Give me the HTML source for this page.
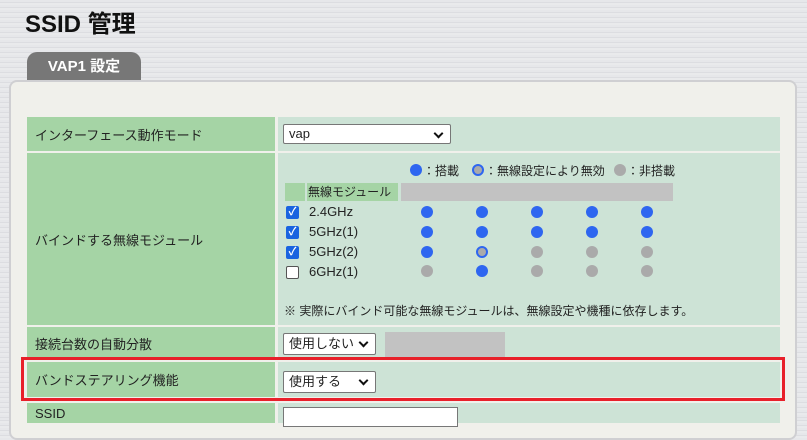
<!DOCTYPE html>
<html><head><meta charset="utf-8"><style>
*{box-sizing:border-box;margin:0;padding:0}
body{width:807px;height:418px;overflow:hidden;position:relative;background:repeating-linear-gradient(180deg,#e6e7ea 0 2px,#dcdde1 2px 3px,#e9eaec 3px 5px);font-family:"Liberation Sans","Noto Sans CJK JP",sans-serif;font-size:13px;color:#222}
.a{position:absolute}
h1{position:absolute;left:25px;top:4px;font-size:24px;font-weight:bold;color:#111}
.tab{left:27px;top:52px;width:114px;height:29px;background:#777;border-radius:10px 10px 0 0;color:#fff;font-weight:bold;font-size:15px;text-align:center;line-height:30px}
.panel{left:9px;top:80px;width:788px;height:360px;background:#f0f0eb;border:2px solid #cfcfd2;border-radius:8px}
.l{background:#a5d4a5;left:27px;width:248px;padding-left:8px;display:flex;align-items:center;white-space:nowrap}
.v{background:#cde3d6;left:278px;width:502px}
.sel{position:absolute;background:#fff;border:1px solid #777;border-radius:2px;font-size:13px;padding-left:5px;line-height:18px;white-space:nowrap}
.sel:after{content:"";position:absolute;right:8px;top:5px;width:5px;height:5px;border-right:2px solid #111;border-bottom:2px solid #111;transform:rotate(45deg)}
.d{position:absolute;width:12px;height:12px;border-radius:50%;background:#2e66f0}
.g{background:#aaa}
.o{background:#aaa;border:2px solid #2e66f0}
.cb{position:absolute;left:286px;width:13px;height:13px;border-radius:2px;background:#1a63e0;color:#fff;font-size:11px;line-height:13px;text-align:center;font-weight:bold}
.cb.n{background:#fff;border:1px solid #555}
.t{position:absolute;white-space:nowrap}
.s{font-size:12px}
</style></head><body>
<h1>SSID 管理</h1>
<div class="a tab">VAP1 設定</div>
<div class="a panel"></div>
<div class="a l" style="top:117px;height:34px">インターフェース動作モード</div>
<div class="a v" style="top:117px;height:34px"></div>
<div class="sel" style="left:283px;top:124px;width:168px;height:20px">vap</div>
<div class="a l" style="top:153px;height:172px">バインドする無線モジュール</div>
<div class="a v" style="top:153px;height:172px"></div>
<div class="d" style="left:410px;top:164px"></div><div class="t s" style="left:423px;top:162px">：搭載</div>
<div class="d o" style="left:472px;top:164px"></div><div class="t s" style="left:485px;top:162px">：無線設定により無効</div>
<div class="d g" style="left:614px;top:164px"></div><div class="t s" style="left:627px;top:162px">：非搭載</div>
<div class="a" style="left:285px;top:183px;width:20px;height:18px;background:#a5d4a5"></div>
<div class="a s" style="left:307px;top:183px;width:91px;height:18px;background:#a5d4a5;padding-left:1px;line-height:18px;white-space:nowrap;overflow:hidden">無線モジュール</div>
<div class="a" style="left:401px;top:183px;width:272px;height:18px;background:#c2c2c2"></div>
<div class="cb" style="top:206px">✓</div><div class="t" style="left:309px;top:204px">2.4GHz</div>
<div class="cb" style="top:226px">✓</div><div class="t" style="left:309px;top:224px">5GHz(1)</div>
<div class="cb" style="top:246px">✓</div><div class="t" style="left:309px;top:244px">5GHz(2)</div>
<div class="cb n" style="top:266px"></div><div class="t" style="left:309px;top:264px">6GHz(1)</div>
<div class="d" style="left:421px;top:206px"></div><div class="d" style="left:476px;top:206px"></div><div class="d" style="left:531px;top:206px"></div><div class="d" style="left:586px;top:206px"></div><div class="d" style="left:641px;top:206px"></div>
<div class="d" style="left:421px;top:226px"></div><div class="d" style="left:476px;top:226px"></div><div class="d" style="left:531px;top:226px"></div><div class="d" style="left:586px;top:226px"></div><div class="d" style="left:641px;top:226px"></div>
<div class="d" style="left:421px;top:246px"></div><div class="d o" style="left:476px;top:246px"></div><div class="d g" style="left:531px;top:246px"></div><div class="d g" style="left:586px;top:246px"></div><div class="d g" style="left:641px;top:246px"></div>
<div class="d g" style="left:421px;top:265px"></div><div class="d" style="left:476px;top:265px"></div><div class="d g" style="left:531px;top:265px"></div><div class="d g" style="left:586px;top:265px"></div><div class="d g" style="left:641px;top:265px"></div>
<div class="t s" style="left:284px;top:302px">※ 実際にバインド可能な無線モジュールは、無線設定や機種に依存します。</div>
<div class="a l" style="top:327px;height:33px">接続台数の自動分散</div>
<div class="a v" style="top:327px;height:33px"></div>
<div class="sel" style="left:283px;top:333px;width:93px;height:22px;line-height:20px">使用しない</div>
<div class="a" style="left:385px;top:332px;width:120px;height:27px;background:#c2c2c2"></div>
<div class="a l" style="top:362px;height:35px">バンドステアリング機能</div>
<div class="a v" style="top:362px;height:35px"></div>
<div class="sel" style="left:283px;top:371px;width:93px;height:22px;line-height:20px">使用する</div>
<div class="a" style="left:21px;top:357px;width:764px;height:44px;border:3px solid #e8202a"></div>
<div class="a l" style="top:403px;height:20px;align-items:flex-start;padding-top:3px">SSID</div>
<div class="a v" style="top:403px;height:20px"></div>
<div class="a" style="left:283px;top:407px;width:175px;height:20px;background:#fff;border:1px solid #777"></div>
</body></html>
